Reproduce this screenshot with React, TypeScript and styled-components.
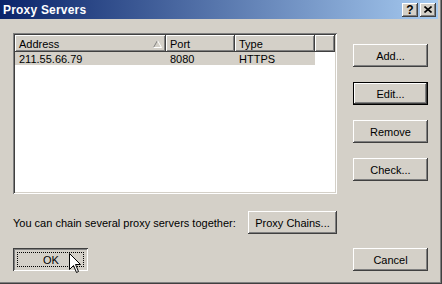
import React from "react";
import styled, { createGlobalStyle, css } from "styled-components";

const GlobalStyle = createGlobalStyle`
  html, body {
    margin: 0;
    padding: 0;
    background: #d4d0c8;
  }
  body {
    font-family: "Liberation Sans", Arial, sans-serif;
    font-size: 11px;
    color: #000;
  }
`;

const Window = styled.div`
  position: relative;
  width: 442px;
  height: 284px;
  box-sizing: border-box;
  background: #d4d0c8;
  overflow: hidden;
  box-shadow: inset -1px -1px #404040, inset -2px -2px #808080;
`;

const TitleBar = styled.div`
  height: 19px;
  margin-right: 4px;
  display: flex;
  align-items: center;
  justify-content: space-between;
  padding: 0 2px 0 3px;
  background: linear-gradient(to right, #0a246a, #a6caf0);
`;

const Title = styled.span`
  color: #fff;
  font-weight: bold;
  font-size: 12px;
  letter-spacing: 0.2px;
`;

const CaptionButtons = styled.div`
  display: flex;
  gap: 2px;
`;

const raised = css`
  background: #d4d0c8;
  box-shadow: inset -1px -1px #404040, inset 1px 1px #fff,
    inset -2px -2px #808080, inset 2px 2px #d4d0c8;
`;

const CaptionButton = styled.div`
  ${raised};
  width: 16px;
  height: 14px;
  display: flex;
  align-items: center;
  justify-content: center;
  font-weight: bold;
  font-size: 12px;
`;

const Content = styled.div`
  padding: 14px 14px 0 13px;
  display: flex;
  flex-direction: column;
`;

const MainRow = styled.div`
  display: flex;
  gap: 16px;
`;

const ListView = styled.div`
  width: 324px;
  height: 161px;
  box-sizing: border-box;
  padding: 2px;
  background: #fff;
  box-shadow: inset 1px 1px #808080, inset -1px -1px #fff,
    inset 2px 2px #404040, inset -2px -2px #d4d0c8;
`;

const HeaderRow = styled.div`
  display: flex;
  height: 17px;
`;

const HeaderCell = styled.div<{ $w?: number }>`
  ${raised};
  position: relative;
  box-sizing: border-box;
  ${(p) => (p.$w ? `width: ${p.$w}px;` : "flex: 1;")}
  display: flex;
  align-items: center;
  padding-left: 4px;
`;

const SortArrow = styled.svg`
  position: absolute;
  right: 4px;
  top: 5px;
`;

const Row = styled.div<{ $selected?: boolean }>`
  display: flex;
  height: 13px;
  width: 300px;
  align-items: center;
  background: ${(p) => (p.$selected ? "#d4d0c8" : "transparent")};
`;

const Cell = styled.div<{ $w: number }>`
  width: ${(p) => p.$w}px;
  box-sizing: border-box;
  padding-left: 4px;
`;

const ButtonColumn = styled.div`
  display: flex;
  flex-direction: column;
  gap: 15px;
  padding-top: 11px;
`;

const Button = styled.div<{ $w?: number; $default?: boolean; $pressed?: boolean }>`
  ${raised};
  position: relative;
  width: ${(p) => p.$w ?? 75}px;
  height: 23px;
  box-sizing: border-box;
  display: flex;
  align-items: center;
  justify-content: center;
  ${(p) =>
    p.$default &&
    css`
      box-shadow: inset 0 0 0 1px #000, inset -2px -2px #404040,
        inset 2px 2px #fff, inset -3px -3px #808080;
    `}
  ${(p) =>
    p.$pressed &&
    css`
      box-shadow: inset 1px 1px #404040, inset -1px -1px #fff,
        inset 2px 2px #808080, inset -2px -2px #d4d0c8;
      padding: 1px 0 0 1px;
    `}
`;

const FocusRect = styled.div`
  position: absolute;
  inset: 4px;
  border: 1px dotted #000;
`;

const ChainRow = styled.div`
  display: flex;
  align-items: center;
  justify-content: space-between;
  width: 324px;
  margin-top: 17px;
`;

const BottomRow = styled.div`
  display: flex;
  justify-content: space-between;
  width: 415px;
  margin-top: 14px;
`;

const Cursor = styled.svg`
  position: absolute;
  left: 69px;
  top: 253px;
`;

export default function App() {
  return (
    <>
      <GlobalStyle />
      <Window>
        <TitleBar>
          <Title>Proxy Servers</Title>
          <CaptionButtons>
            <CaptionButton>?</CaptionButton>
            <CaptionButton>
              <svg width="8" height="7" viewBox="0 0 8 7">
                <path d="M0.5 0.5 L7.5 6.5 M7.5 0.5 L0.5 6.5" stroke="#000" strokeWidth="1.6" />
              </svg>
            </CaptionButton>
          </CaptionButtons>
        </TitleBar>
        <Content>
          <MainRow>
            <ListView>
              <HeaderRow>
                <HeaderCell $w={151}>
                  Address
                  <SortArrow width="9" height="8" viewBox="0 0 9 8">
                    <path d="M4.5 0.5 L0.5 7.5" stroke="#808080" />
                    <path d="M4.5 0.5 L8.5 7.5 L0.5 7.5" stroke="#fff" fill="none" />
                  </SortArrow>
                </HeaderCell>
                <HeaderCell $w={69}>Port</HeaderCell>
                <HeaderCell $w={80}>Type</HeaderCell>
                <HeaderCell />
              </HeaderRow>
              <Row $selected>
                <Cell $w={151}>211.55.66.79</Cell>
                <Cell $w={69}>8080</Cell>
                <Cell $w={80}>HTTPS</Cell>
              </Row>
            </ListView>
            <ButtonColumn>
              <Button>Add...</Button>
              <Button $default>Edit...</Button>
              <Button>Remove</Button>
              <Button>Check...</Button>
            </ButtonColumn>
          </MainRow>
          <ChainRow>
            <span>You can chain several proxy servers together:</span>
            <Button $w={89}>Proxy Chains...</Button>
          </ChainRow>
          <BottomRow>
            <Button $pressed>
              <FocusRect />
              OK
            </Button>
            <Button>Cancel</Button>
          </BottomRow>
        </Content>
        <Cursor width="13" height="21" viewBox="0 0 13 21">
          <path
            d="M0.5 0.5 L0.5 16.5 L4.5 12.5 L7.5 19.5 L9.5 18.5 L6.5 11.5 L11.5 11.5 Z"
            fill="#fff"
            stroke="#000"
            strokeWidth="1"
          />
        </Cursor>
      </Window>
    </>
  );
}
